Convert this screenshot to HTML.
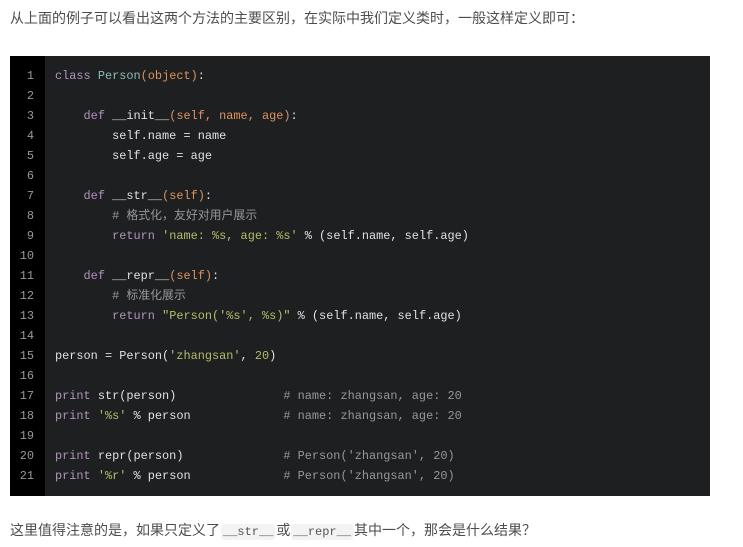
<!DOCTYPE html>
<html><head><meta charset="utf-8"><style>
body{margin:0;background:#fff;width:743px;height:547px;overflow:hidden;font-family:"Liberation Sans","Noto Sans CJK SC",sans-serif;color:#4d4d4d;font-size:14px}
.p{position:absolute;left:10px;white-space:nowrap}
.code{position:absolute;left:10px;top:56px;width:700px;height:440px;background:#1d1f21}
.gut{position:absolute;left:0;top:0;width:35px;height:440px;background:#000}
pre{margin:0;position:absolute;top:10px;font-family:"Liberation Mono","Noto Sans CJK SC",monospace;font-size:11.9px;line-height:20px;color:#e0e0e0}
.ln{left:0;width:24px;text-align:right;color:#999}
.src{left:45px}
.k{color:#b294bb}.t{color:#8abeb7}.o{color:#de935f}.s{color:#b5bd68}.c{color:#969896}
code{font-family:"Liberation Mono",monospace;background:#f3f3f3;border-radius:3px;padding:1px 2px;font-size:12px;color:#555;margin:0 1px}
</style></head><body>
<div class="p" style="top:8px">从上面的例子可以看出这两个方法的主要区别，在实际中我们定义类时，一般这样定义即可：</div>
<div class="code"><div class="gut"></div>
<pre class="ln">1
2
3
4
5
6
7
8
9
10
11
12
13
14
15
16
17
18
19
20
21</pre>
<pre class="src"><span class="k">class</span> <span class="t">Person</span><span class="o">(object)</span>:

    <span class="k">def</span> __init__<span class="o">(self, name, age)</span>:
        self.name = name
        self.age = age

    <span class="k">def</span> __str__<span class="o">(self)</span>:
        <span class="c"># 格式化，友好对用户展示</span>
        <span class="k">return</span> <span class="s">'name: %s, age: %s'</span> % (self.name, self.age)

    <span class="k">def</span> __repr__<span class="o">(self)</span>:
        <span class="c"># 标准化展示</span>
        <span class="k">return</span> <span class="s">"Person('%s', %s)"</span> % (self.name, self.age)

person = Person(<span class="s">'zhangsan'</span>, <span class="s">20</span>)

<span class="k">print</span> str(person)               <span class="c"># name: zhangsan, age: 20</span>
<span class="k">print</span> <span class="s">'%s'</span> % person             <span class="c"># name: zhangsan, age: 20</span>

<span class="k">print</span> repr(person)              <span class="c"># Person('zhangsan', 20)</span>
<span class="k">print</span> <span class="s">'%r'</span> % person             <span class="c"># Person('zhangsan', 20)</span></pre>
</div>
<div class="p" style="top:520px">这里值得注意的是，如果只定义了<code>__str__</code>或<code>__repr__</code>其中一个，那会是什么结果？</div>
</body></html>
